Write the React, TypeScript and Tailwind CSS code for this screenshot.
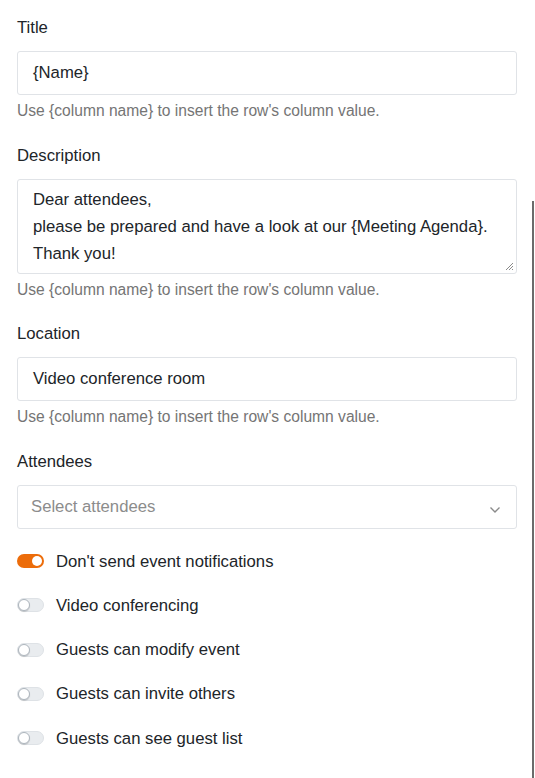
import React from "react";

function Toggle({ on }: { on?: boolean }) {
  if (on) {
    return (
      <span className="relative inline-block w-[27px] h-[14px] rounded-full bg-[#ec6c0a] shrink-0">
        <span className="absolute right-[2px] top-[2px] w-[10px] h-[10px] rounded-full bg-white" />
      </span>
    );
  }
  return (
    <span className="relative inline-block w-[27px] h-[14px] rounded-full bg-[#e9ecef] border border-[#dee2e6] shrink-0">
      <span className="absolute left-[0px] top-[0px] w-[12px] h-[12px] rounded-full bg-white border border-[#adb5bd] shadow-[0_1px_1px_rgba(0,0,0,0.15)]" />
    </span>
  );
}

function Help() {
  return (
    <div className="text-[15.6px] leading-[20px] text-[#757575] mt-[6px]">
      Use {"{column name}"} to insert the row's column value.
    </div>
  );
}

function Label({ children }: { children: React.ReactNode }) {
  return <div className="text-[16.7px] leading-[24px] text-[#212529] mb-[11px]">{children}</div>;
}

export default function App() {
  const toggles: [string, boolean][] = [
    ["Don't send event notifications", true],
    ["Video conferencing", false],
    ["Guests can modify event", false],
    ["Guests can invite others", false],
    ["Guests can see guest list", false],
  ];
  return (
    <div className="relative w-[535px] h-[778px] bg-white overflow-hidden font-[family-name:'Liberation_Sans',Arial,sans-serif] text-[#212529]">
      <div className="absolute right-[1px] top-[201px] bottom-0 w-[2px] bg-[#6b6b6b]" />
      <div className="px-[17px] pr-[18px] pt-[16px]">
        <Label>Title</Label>
        <div className="h-[44px] border border-[#e0e3e7] rounded-[3px] px-[15px] flex items-center text-[16.7px]">
          {"{Name}"}
        </div>
        <Help />

        <div className="mt-[23px]">
          <Label>Description</Label>
          <div className="relative h-[95px] border border-[#e0e3e7] rounded-[3px] px-[15px] pt-[6px] text-[16.7px] leading-[27px]">
            <div>Dear attendees,</div>
            <div>please be prepared and have a look at our {"{Meeting Agenda}"}.</div>
            <div>Thank you!</div>
            <svg className="absolute right-[2px] bottom-[2px]" width="9" height="9" viewBox="0 0 9 9">
              <path d="M8 1 L1 8 M8 4 L4 8 M8 7 L7 8" stroke="#8a8a8a" strokeWidth="1" />
            </svg>
          </div>
          <Help />
        </div>

        <div className="mt-[22px]">
          <Label>Location</Label>
          <div className="h-[44px] border border-[#e0e3e7] rounded-[3px] px-[15px] flex items-center text-[16.7px]">
            Video conference room
          </div>
          <Help />
        </div>

        <div className="mt-[23px]">
          <Label>Attendees</Label>
          <div className="h-[44px] border border-[#e0e3e7] rounded-[3px] pl-[13px] pr-[15px] flex items-center justify-between text-[16.7px]">
            <span className="text-[#8c8c8c]">Select attendees</span>
            <svg width="12" height="8" viewBox="0 0 12 8" className="mt-[6px]">
              <path d="M1.5 1.5 L6 6 L10.5 1.5" stroke="#8a8a8a" strokeWidth="1.4" fill="none" />
            </svg>
          </div>
        </div>

        <div className="mt-[10px] flex flex-col">
          {toggles.map(([t, on]) => (
            <div key={t} className="flex items-center h-[44.25px] gap-[12px]">
              <Toggle on={on} />
              <span className="text-[16.7px]">{t}</span>
            </div>
          ))}
        </div>
      </div>
    </div>
  );
}
